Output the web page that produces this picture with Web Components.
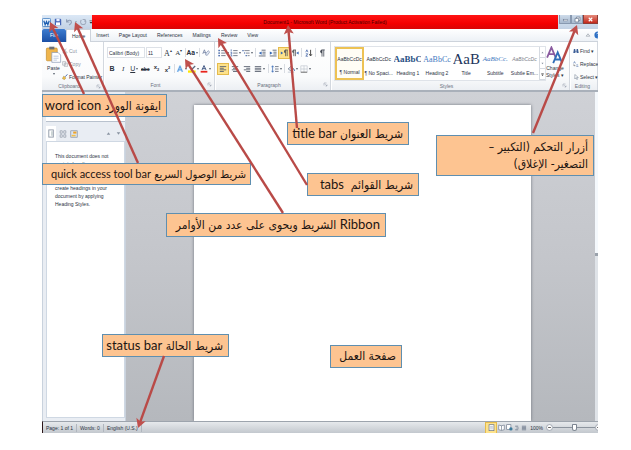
<!DOCTYPE html>
<html lang="en">
<head>
<meta charset="utf-8">
<title>Microsoft Word window parts</title>
<style>
body{margin:0;background:#fff;font-family:"Liberation Sans",Roboto,sans-serif;font-size:5px;line-height:8px;color:#2c333f}
</style>
</head>
<body>
<word-lesson></word-lesson>
<script>
const RESET = `*{box-sizing:border-box}button,select,input{font:inherit;color:inherit;margin:0;padding:0;border:0;background:none;line-height:inherit}svg{display:block}`;
const define = (name, html, init) => customElements.define(name, class extends HTMLElement {
  constructor(){
    super();
    const t = document.createElement('template');
    t.innerHTML = `<style>${RESET}</style>` + html;
    this.attachShadow({mode:'open'}).append(t.content.cloneNode(true));
  }
  connectedCallback(){ if(init) init(this, this.shadowRoot); }
});

const lines = (a, c='#5a6270') => a.map(([x,w],i)=>`<rect x="${x}" y="${1.5+i*2}" width="${w}" height="1.1" fill="${c}"/>`).join('');
const ICONS = {
  word:`<rect x=".5" y=".5" width="9" height="9" rx="1" fill="#e8f2fc" stroke="#3f7cc0" stroke-width=".9"/><path d="M2 3l1.500 4.500L5 4l1.500 3.500L8 3" fill="none" stroke="#1f5fb0" stroke-width="1.400"/>`,
  save:`<path d="M1 1h7l1 1v7H1z" fill="#4667b8"/><rect x="3" y="1" width="4" height="3" fill="#e9f0ff"/><rect x="2.5" y="5.5" width="5" height="3.5" fill="#fff"/>`,
  undo:`<path d="M2 1.5v3.5h3.5M2.3 4.6C4 2 8.3 2.4 8 5.5 7.8 7.300 6.500 8.200 5 8.700" fill="none" stroke="#8f9db5" stroke-width="1.300"/>`,
  redo:`<path d="M3 2.500a3.300 3.300 0 1 0 4.500 0M7.500 5V2h-3" fill="none" stroke="#a0abbd" stroke-width="1.300"/>`,
  caret:`<path d="M3 4h4L5 6.500z" fill="#4a5260"/>`,
  more:`<path d="M2.500 3h5" stroke="#333" /><path d="M2.500 5h5L5 8z" fill="#333"/>`,
  min:`<rect x="2" y="5" width="6" height="2" fill="#fff" stroke="#62718a" stroke-width=".7"/>`,
  max:`<path d="M3.500 3V1.500h5v5H7M1.500 3.500h5v5h-5z" fill="#fff" stroke="#62718a" stroke-width="1"/>`,
  close:`<path d="M2.500 2.500l5 5M7.500 2.500l-5 5" stroke="#fff" stroke-width="1.700"/>`,
  up:`<path d="M2 7l3-4 3 4z" fill="#fff" stroke="#6c7584" stroke-width=".8"/>`,
  help:`<circle cx="5" cy="5" r="4.500" fill="#2c6fc4"/><path d="M3.600 4a1.500 1.500 0 1 1 1.600 1.500v1M5.200 7.400v.8" fill="none" stroke="#fff"/>`,
  paste:`<rect x=".8" y="1.200" width="6.400" height="7.500" rx=".6" fill="#efb54c" stroke="#c48a2a" stroke-width=".4"/><rect x="2.500" y=".4" width="3" height="1.600" fill="#6d6f74"/><path d="M4 3.800h3.700l1.500 1.500v4.300H4z" fill="#fff" stroke="#8496b4" stroke-width=".4"/><path d="M5 6h3M5 7.200h3M5 8.300h2" stroke="#9fb2d0" stroke-width=".4"/>`,
  cut:`<path d="M3 1l3 5M7 1L4 6" stroke="#9aa1ac"/><circle cx="3" cy="7.500" r="1.300" fill="none" stroke="#9aa1ac"/><circle cx="7" cy="7.500" r="1.300" fill="none" stroke="#9aa1ac"/>`,
  copy:`<path d="M1 1h5v6H1zM4 3.500h5v6H4z" fill="#f3f3f3" stroke="#a4a9b2"/>`,
  brush:`<path d="M9 .500L5.500 4.500" stroke="#3b62ab" stroke-width="1.500"/><path d="M3 3.500l3.500 3L4 9.500 .500 7.500z" fill="#f0c04c" stroke="#8a6a2a" stroke-width=".6"/>`,
  clear:`<path d="M1 6l2-5 2 5M1.800 4.500h2.400" fill="none" stroke="#6f7da0"/><path d="M5 5l3-3 1.500 2-3 4-2-.5z" fill="#dfe7f4" stroke="#6f7da0" stroke-width=".7"/>`,
  glow:`<path d="M2 8.500l3-7 3 7M3.200 6h3.600" fill="none" stroke="#b9dcfb" stroke-width="2.600"/><path d="M2 8.500l3-7 3 7M3.200 6h3.600" fill="none" stroke="#4f8fd6" stroke-width="1"/>`,
  marker:`<path d="M8.500 .500L4 5l1.200 1.200L9.500 2z" fill="#56657e"/><rect y="6.800" width="9.500" height="2.800" fill="#ffe600"/>`,
  color:`<path d="M2.500 6.200l2.500-5.500 2.500 5.500M3.300 4.600h3.400" fill="none" stroke="#2f4777" stroke-width="1.100"/><rect x=".8" y="7.300" width="8.400" height="2.200" fill="#e8241c"/>`,
  bullets:`<g fill="#3b5fa5"><rect x=".5" y="1" width="1.800" height="1.800"/><rect x=".5" y="4.200" width="1.800" height="1.800"/><rect x=".5" y="7.400" width="1.800" height="1.800"/></g><path d="M4 2h5.500M4 5.100h5.500M4 8.300h5.500" stroke="#69717f" stroke-width="1.100"/>`,
  numbers:`<path d="M1.500 .5v2.500M.7 4.200h1.500v2H.7M.7 7.500h1.500v2" stroke="#3b5fa5" fill="none" stroke-width=".9"/><path d="M4 2h5.500M4 5.100h5.500M4 8.300h5.500" stroke="#69717f" stroke-width="1.100"/>`,
  multi:`<path d="M.5 2h1.500M2.500 5h1.500M4.500 8.300H6" stroke="#3b5fa5" stroke-width="1.400"/><path d="M3 2h6.500M5 5.100h4.500M7 8.300h2.500" stroke="#69717f"/>`,
  outdent:`<path d="M4.500 1.500h5M5.500 4h4M5.500 6.200h4M1 8.700h8.500" stroke="#59616f" stroke-width="1.100"/><path d="M4.500 3v4.200L1 5.100z" fill="#3568b5"/>`,
  indent:`<path d="M4.500 1.500h5M5.500 4h4M5.500 6.200h4M1 8.700h8.500" stroke="#59616f" stroke-width="1.100"/><path d="M1 3v4.200l3.500-2.100z" fill="#3568b5"/>`,
  ltr:`<path d="M7 1v8M9 1v8M9.500 1.300H6.500" stroke="#555" /><path d="M7 1a2 2 0 0 0 0 4z" fill="#555"/><path d="M1 3l3 2-3 2z" fill="#3568b5"/>`,
  rtl:`<path d="M3.500 1v8M5.500 1v8M6 1.300H3" stroke="#555"/><path d="M3.500 1a2 2 0 0 0 0 4z" fill="#555"/><path d="M9.500 3l-3 2 3 2z" fill="#3568b5"/>`,
  sort:`<path d="M1 4l1.300-3L3.700 4M1 6h2.500L1 9h2.700" fill="none" stroke="#3b5fa5" stroke-width=".9"/><path d="M7 1v7.500M5.300 6.500L7 8.700l1.700-2.200" fill="none" stroke="#444" stroke-width="1.200"/>`,
  pilcrow:`<path d="M5 1v8.500M7.200 1v8.500M8.500 1.200H4.500" stroke="#444a55"/><path d="M5 1a2.200 2.200 0 0 0 0 4.500z" fill="#444a55"/>`,
  left:lines([[1,8],[1,5],[1,8],[1,5]]), center:lines([[1,8],[2.5,5],[1,8],[2.5,5]]),
  right:lines([[1,8],[4,5],[1,8],[4,5]]), justify:lines([[1,8],[1,8],[1,8],[1,8]]),
  spacing:`<path d="M2 1v8M.600 2.800L2 1l1.400 1.800M.600 7.200L2 9l1.400-1.800" fill="none" stroke="#3568b5" stroke-width=".9"/><path d="M5 2h4.500M5 5h4.500M5 8h4.500" stroke="#69717f" stroke-width="1.100"/>`,
  bucket:`<path d="M1.500 5L5 1.500 8.500 5 5 7.500z" fill="#e6ebf3" stroke="#5f6c85" stroke-width=".9"/><path d="M8.700 5l.8 2.500" stroke="#3568b5"/><rect x="1" y="8.200" width="8" height="1.500" fill="#cfd5de"/>`,
  borders:`<path d="M1 1h8v8M1 1v8M5 1v8M1 5h8" stroke="#b3bac6" fill="none" stroke-width=".7"/><path d="M1 9h8" stroke="#444"/>`,
  styles:`<path d="M.6 6.500L3 .8l2.400 5.700M1.500 4.500h3" fill="none" stroke="#8a5b9f" stroke-width="1"/><path d="M4 9.500l2.500-6 2.500 6M5 7.500h3" fill="none" stroke="#2f6db8" stroke-width="1"/>`,
  find:`<path d="M1.500 1.500h2.300v3H6V1.500h2.300L9.500 8.500H6V6H4v2.500H.500z" fill="#3d5f97"/>`,
  replace:`<path d="M1 4l1.500-3L4 4M5.500 6.500h3M5.500 9h3.500" fill="none" stroke="#476aa5"/><path d="M1.500 5.500v2.300h2.500" fill="none" stroke="#555"/>`,
  select:`<path d="M3 .800v7.500l2-2 1.300 3 1.200-.5-1.300-2.900H9z" fill="#fff" stroke="#68758c" stroke-width=".8"/>`,
  launch:`<path d="M2 7V2h5" fill="none" stroke="#8b93a0"/><path d="M4.500 4.500L8 8M8 5v3H5" fill="none" stroke="#8b93a0"/>`,
  headings:`<rect x="2" y="1" width="5" height="8" fill="#fff" stroke="#8d97a6"/><path d="M5.500 2.500v5" stroke="#9aa"/>`,
  thumbs:`<path d="M1.500 1h2.500v3H1.500zM6 1h2.500v3H6zM1.500 6h2.500v3H1.500zM6 6h2.500v3H6z" fill="#fff" stroke="#7c8898" stroke-width=".8"/>`,
  results:`<rect x="1" y="1" width="8" height="8" fill="#dbe5f3" stroke="#7c8898" stroke-width=".8"/><rect x="4" y="2" width="4" height="2.500" fill="#f0a326"/><rect x="2" y="6" width="5" height="2" fill="#f4c04a"/>`,
  tup:`<path d="M1.500 7.500L5 2.500l3.500 5z" fill="#8993a1"/>`, tdown:`<path d="M1.500 2.500h7L5 7.500z" fill="#8993a1"/>`,
  print:`<rect x="1.500" y="1" width="7" height="8.500" fill="#fff" stroke="#667286"/><path d="M3 3.500h4M3 5.300h4M3 7h4" stroke="#9aa5b5" stroke-width=".8"/>`,
  read:`<path d="M5 2.500L1 1.500v6.500l4 1.200 4-1.200V1.500zM5 2.500v6.500" fill="#fff" stroke="#667286" stroke-width=".9"/>`,
  web:`<rect x="1" y="1" width="6" height="7" fill="#fff" stroke="#667286" stroke-width=".9"/><circle cx="7" cy="7" r="2.400" fill="#3c7a9c"/>`,
  outline:`<path d="M2 2h5M4 5h4M2 8h5" stroke="#667286" stroke-width="1.300"/>`,
  draft:`<path d="M1.500 2h7M1.500 4h7M1.500 6h7M1.500 8h7" stroke="#667286" stroke-width="1.200"/>`,
  minus:`<circle cx="5" cy="5" r="4.200" fill="#fff" stroke="#7b8593" stroke-width=".9"/><path d="M3 5h4" stroke="#444" stroke-width="1.200"/>`,
  plus:`<circle cx="5" cy="5" r="4.200" fill="#fff" stroke="#7b8593" stroke-width=".9"/><path d="M3 5h4M5 3v4" stroke="#444" stroke-width="1.200"/>`
};

define('w-icon', `<style>:host{display:inline-block;flex:none;width:var(--s,8px);height:var(--s,8px)}svg{width:100%;height:100%}</style><svg viewBox="0 0 10 10"></svg>`,
  (h,r)=>{ r.querySelector('svg').innerHTML = ICONS[h.getAttribute('name')]; });

define('w-tool', `<style>
:host{display:block;flex:none}
button{display:flex;align-items:center;justify-content:center;gap:1px;height:10px;min-width:10px}
:host([on]) button{background:#fde28b;box-shadow:0 0 0 1px #e5bb4c}
:host([drop]) button::after{content:"";border:1px solid transparent;border-top:2px solid #59616e;border-bottom:0}
:host([stack]) button{flex-direction:column;height:auto}
</style><button type="button"><slot></slot></button>`,
  (h,r)=>{ r.querySelector('button').setAttribute('aria-label', h.getAttribute('label') || h.textContent.trim()); });

define('w-group', `<style>
:host{display:flex;flex-direction:column;flex:none;border-right:1px solid #d3d8df;box-shadow:1px 0 #fff}
.body{flex:1;display:flex;padding:4px 3px 0}
footer{display:flex;align-items:center;height:11px;padding-right:2px;color:#69717e}
span{flex:1;text-align:center}
</style><div class="body"><slot></slot></div><footer><span></span></footer>`,
  (h,r)=>{ r.querySelector('span').textContent=h.getAttribute('label');
    if(!h.hasAttribute('plain')) r.querySelector('footer').insertAdjacentHTML('beforeend','<w-icon name="launch" style="--s:5px"></w-icon>'); });

define('w-style', `<style>
:host{display:block;flex:1 1 0;min-width:0}
button{display:block;width:100%;height:33px;overflow:hidden;white-space:nowrap}
:host([on]) button{border:2px solid #edc254;background:#fffdf5}
b{display:flex;justify-content:center;align-items:center;height:20px;font-weight:400;overflow:hidden;margin:0 1px}
:host([on]) b{height:18px;margin:0}
small{display:block;font-size:5px;line-height:9px;text-align:center}
</style><button type="button"><b><slot></slot></b><small></small></button>`,
  (h,r)=>{ r.querySelector('small').textContent=h.getAttribute('label');
    r.querySelector('b').style.cssText=h.getAttribute('look')||''; });

define('w-titlebar', `<style>
:host{display:flex;height:14px;background:linear-gradient(#dbe8f6,#c3d2e4)}
nav{flex:none;width:50px;display:flex;align-items:center;gap:1px}
nav w-icon[name=save]{margin-left:2px}
h1{flex:1;margin:0;font-size:5px;font-weight:400;line-height:14px;text-align:center;color:#4a0000;background:linear-gradient(#ff1414,#f40000 60%,#d80505);white-space:nowrap}
.ctl{flex:none;display:flex;align-items:flex-start;width:40px;justify-content:flex-end}
.ctl button{height:9px;width:12px;display:grid;place-items:center;background:linear-gradient(#cfdceb,#a9bacf);border:1px solid #8899b0;border-top:0}
.ctl button:last-child{width:15px;background:linear-gradient(#e58b7c,#c4281b);border-color:#8f3b35}
</style>
<nav><w-icon name="word" style="--s:9px"></w-icon><w-icon name="save"></w-icon><w-icon name="undo" style="margin-left:2px"></w-icon><w-icon name="caret" style="--s:4px"></w-icon><w-icon name="redo"></w-icon><w-icon name="more" style="--s:6px"></w-icon></nav>
<h1>Document1 - Microsoft Word (Product Activation Failed)</h1>
<div class="ctl"><button aria-label="Minimize"><w-icon name="min" style="--s:7px"></w-icon></button><button aria-label="Restore"><w-icon name="max" style="--s:7px"></w-icon></button><button aria-label="Close"><w-icon name="close" style="--s:7px"></w-icon></button></div>`);

define('w-tabs', `<style>
:host{display:flex;height:13px;background:linear-gradient(#fff,#edf1f6);border-bottom:1px solid #cdd3db}
button{line-height:13px;height:13px;padding:0 5px;white-space:nowrap}
.file{width:24px;padding:0;color:#fff;background:linear-gradient(#3d7dd0,#1c4fa5);border-radius:2px 2px 0 0}
.home{background:#fff;border:1px solid #cdd3db;border-bottom:0;padding:0 5px}
.end{margin-left:auto;display:flex;align-items:center;gap:3px;margin-right:-4px}
</style><button class="file">File</button><button class="home">Home</button><button>Insert</button><button>Page Layout</button><button>References</button><button>Mailings</button><button>Review</button><button>View</button>
<span class="end"><w-icon name="up" style="--s:6px"></w-icon><w-icon name="help"></w-icon></span>`);

define('w-ribbon', `<style>
:host{display:flex;height:50px;background:linear-gradient(#fff,#fafbfc 72%,#eceff3);border-bottom:2px solid #a9b0ba;overflow:hidden;white-space:nowrap}
.col{display:flex;flex-direction:column;gap:3px}
.row{display:flex;align-items:center;justify-content:space-between;height:13px}
.sep{width:1px;height:9px;background:#d8dce2}
.grow{flex:1}
select{appearance:none;height:11px;border:1px solid #dde1e7;background:#fff;padding:0 1px}
.s0{width:38px}.s1{width:16px}
.gallery{flex:1;min-width:0;display:flex;background:#fff;border:1px solid #dfe3e9}
.scroll{display:flex;flex-direction:column;flex:none;width:6px;border-left:1px solid #d5dae1}
.scroll button{flex:1;display:grid;place-items:center;border-bottom:1px solid #d5dae1}
.clip{display:flex;flex-direction:column;gap:3px;color:#8d939e;align-items:flex-start}
</style>
<w-group label="Clipboard" style="width:62px">
 <w-tool stack drop label="Paste" style="width:17px"><w-icon name="paste" style="--s:17px"></w-icon>Paste</w-tool>
 <div class="clip">
  <w-tool label="Cut"><w-icon name="cut" style="--s:6px"></w-icon>Cut</w-tool>
  <w-tool label="Copy"><w-icon name="copy" style="--s:6px"></w-icon>Copy</w-tool>
  <w-tool label="Format Painter" style="color:#2c333f"><w-icon name="brush" style="--s:6px"></w-icon>Format Painter</w-tool></div>
</w-group>
<w-group label="Font" style="width:111px"><div class="col grow">
 <div class="row"><select class="s0" aria-label="Font"><option>Calibri (Body)</option></select><select class="s1" aria-label="Size"><option>11</option></select>
  <w-tool label="Grow"><span style="font:8px 'Liberation Serif',serif">A<sup style="font-size:4px">▴</sup></span></w-tool><w-tool label="Shrink"><span style="font:7px 'Liberation Serif',serif">A<sup style="font-size:4px">▾</sup></span></w-tool><i class="sep"></i><w-tool drop><span style="font:bold 7px Roboto,sans-serif">Aa</span></w-tool><i class="sep"></i><w-tool label="Clear"><w-icon name="clear"></w-icon></w-tool></div>
 <div class="row"><w-tool><b style="font-size:7px">B</b></w-tool><w-tool><i style="font:italic 7px 'Liberation Serif',serif">I</i></w-tool><w-tool drop><u style="font-size:7px">U</u></w-tool><w-tool><s style="font-weight:bold">abc</s></w-tool><w-tool><span style="font-weight:bold;font-size:6px">x<sub style="font-size:4px">2</sub></span></w-tool><w-tool><span style="font-weight:bold;font-size:6px">x<sup style="font-size:4px">2</sup></span></w-tool><i class="sep"></i><w-tool drop label="Effects"><w-icon name="glow"></w-icon></w-tool><w-tool drop label="Highlight"><w-icon name="marker"></w-icon></w-tool><w-tool drop label="Color"><w-icon name="color"></w-icon></w-tool></div>
</div></w-group>
<w-group label="Paragraph" style="width:116px"><div class="col grow">
 <div class="row"><w-tool drop label="Bullets"><w-icon name="bullets"></w-icon></w-tool><w-tool drop label="Numbering"><w-icon name="numbers"></w-icon></w-tool><w-tool drop label="Multilevel"><w-icon name="multi"></w-icon></w-tool><i class="sep"></i><w-tool label="Outdent"><w-icon name="outdent"></w-icon></w-tool><w-tool label="Indent"><w-icon name="indent"></w-icon></w-tool><w-tool on label="Left to right"><w-icon name="ltr"></w-icon></w-tool><w-tool label="Right to left"><w-icon name="rtl"></w-icon></w-tool><i class="sep"></i><w-tool label="Sort"><w-icon name="sort"></w-icon></w-tool><i class="sep"></i><w-tool label="Marks"><w-icon name="pilcrow"></w-icon></w-tool></div>
 <div class="row" style="padding-right:16px"><w-tool on label="Left"><w-icon name="left"></w-icon></w-tool><w-tool label="Center"><w-icon name="center"></w-icon></w-tool><w-tool label="Right"><w-icon name="right"></w-icon></w-tool><w-tool drop label="Justify"><w-icon name="justify"></w-icon></w-tool><i class="sep"></i><w-tool drop label="Spacing"><w-icon name="spacing"></w-icon></w-tool><i class="sep"></i><w-tool drop label="Shading"><w-icon name="bucket"></w-icon></w-tool><w-tool drop label="Borders"><w-icon name="borders"></w-icon></w-tool></div>
</div></w-group>
<w-group label="Styles" style="flex:1 1 0;min-width:0">
 <div class="gallery">
  <w-style on label="¶ Normal">AaBbCcDc</w-style><w-style label="¶ No Spaci...">AaBbCcDc</w-style>
  <w-style label="Heading 1" look="font:bold 9px 'Liberation Serif',serif;color:#2b5185">AaBbC</w-style>
  <w-style label="Heading 2" look="font:8px 'Liberation Serif',serif;color:#3f78c0">AaBbCc</w-style>
  <w-style label="Title" look="font:15px 'Liberation Serif',serif;color:#1d355c">AaB</w-style>
  <w-style label="Subtitle" look="font:italic 7px 'Liberation Serif',serif;color:#3f78c0">AaBbCc.</w-style>
  <w-style label="Subtle Em..." look="font-style:italic;color:#7d828a">AaBbCcDc</w-style>
  <div class="scroll"><button aria-label="Up"><w-icon name="tup" style="--s:3px"></w-icon></button><button aria-label="Down"><w-icon name="tdown" style="--s:3px"></w-icon></button><button aria-label="More styles"><w-icon name="more" style="--s:5px"></w-icon></button></div>
 </div>
 <w-tool stack label="Change Styles" style="width:20px"><w-icon name="styles" style="--s:18px"></w-icon><span style="line-height:7px">Change<br>Styles ▾</span></w-tool>
</w-group>
<w-group plain label="Editing" style="width:28px"><div class="col">
 <w-tool label="Find"><w-icon name="find" style="--s:6px"></w-icon>Find ▾</w-tool><w-tool label="Replace"><w-icon name="replace" style="--s:6px"></w-icon>Replace</w-tool><w-tool label="Select"><w-icon name="select" style="--s:6px"></w-icon>Select ▾</w-tool></div></w-group>`);

define('w-workspace', `<style>
:host{flex:1;display:flex;background:linear-gradient(#cfd1d6,#c4c6cb 50%,#b5b8bd)}
aside{flex:none;width:84px;background:#e9edf3;border:solid #c9d2dd;border-width:0 1px;padding:22px 0 3px 3px;display:flex;flex-direction:column}
.field{flex:none;height:8px;background:#fff;border-bottom:1px solid #b9c2ce}
.views{display:flex;align-items:center;height:15px;gap:1px;margin-top:4px}
.views button{width:10px;height:15px;display:grid;place-items:center}
.views button:first-child{background:#fff}
.views w-icon:nth-of-type(1){margin-left:auto}
.nav{flex:1;background:#fff;border:1px solid #cfd8e3;padding:10px 8px;line-height:8px}
.nav p{margin:0 0 16px}
main{flex:1;display:flex;padding:13px 64px 0 68px}
article{flex:1;background:#fff;box-shadow:0 0 3px #6e737b}
.bar{flex:none;width:3px;background:linear-gradient(#f4f8fc 49%,#9aa2ac 49%,#9aa2ac 50%,#dfe3e8 50%)}
</style>
<aside><div class="field"></div><div class="views"><button aria-label="Headings"><w-icon name="headings" style="--s:9px"></w-icon></button><button aria-label="Pages"><w-icon name="thumbs" style="--s:8px"></w-icon></button><button aria-label="Results"><w-icon name="results" style="--s:8px"></w-icon></button><w-icon name="tup" style="--s:5px"></w-icon><w-icon name="tdown" style="--s:5px;margin:0 4px"></w-icon></div>
<div class="nav"><p>This document does not<br>contain headings.</p><p>create headings in your<br>document by applying<br>Heading Styles.</p></div></aside>
<main><article></article></main><div class="bar"></div>`);

define('w-status', `<style>
:host{display:flex;align-items:center;height:12px;background:linear-gradient(#e6e9ec,#c3c8ce);border-top:1px solid #9da4ad;border-left:1px solid #2c1518;overflow:hidden;white-space:nowrap}
span{padding:0 3px;border-right:1px solid #b0b6be}
.end{margin-left:auto;display:flex;align-items:center;gap:0;margin-right:-4px}
input{appearance:none;width:42px;height:8px;background:linear-gradient(#8c949e,#8c949e) center/100% 1px no-repeat}
input::-webkit-slider-thumb{appearance:none;width:5px;height:7px;background:#fff;border:1px solid #7d8692;border-radius:1px 1px 3px 3px}
label{margin:0 3px}
</style><span>Page: 1 of 1</span><span>Words: 0</span><span>English (U.S.)</span>
<div class="end"><w-tool on label="Print layout"><w-icon name="print" style="--s:7px"></w-icon></w-tool><w-tool label="Reading" style="width:8px"><w-icon name="read" style="--s:7px"></w-icon></w-tool><w-tool label="Web" style="width:8px"><w-icon name="web" style="--s:7px"></w-icon></w-tool><w-tool label="Outline" style="width:7px"><w-icon name="outline" style="--s:6px"></w-icon></w-tool><w-tool label="Draft" style="width:8px"><w-icon name="draft" style="--s:6px"></w-icon></w-tool><label for="z">100%</label><w-icon name="minus" style="--s:7px"></w-icon><input id="z" type="range" value="50"><w-icon name="plus" style="--s:7px"></w-icon></div>`);

define('w-note', `<style>
:host{position:absolute;display:flex;align-items:center;justify-content:flex-end;padding:0 5px;background:#fdc491;border:1px solid #5f8fb0;color:#1e1512;font:12px/17px "DejaVu Sans Condensed","DejaVu Sans",sans-serif;white-space:nowrap;box-sizing:border-box}
::slotted(bdi){font-family:Lato,sans-serif;font-size:13px}
:host([small]){font-size:11px;padding:0 4px}
:host([small]) ::slotted(bdi){font-size:11px}
</style><div dir="rtl"><slot></slot></div>`);

define('w-arrows', `<style>:host{position:absolute;left:0;top:0;pointer-events:none}</style>
<svg width="631" height="450" viewBox="0 0 631 450"></svg>`, (h,r)=>{
  const A=[[84,94,50,22],[138,163,75,22],[283,213,185,59],[307,185,218,38],[297,128,288,25],[533,133,577,25],[164,356,138,428]];
  r.querySelector('svg').innerHTML = A.map(([x1,y1,x2,y2])=>{
    const d=Math.hypot(x2-x1,y2-y1), u=(x2-x1)/d, v=(y2-y1)/d, p=(b,s)=>`${x2-u*b-v*s} ${y2-v*b+u*s}`;
    return `<path d="M${x1} ${y1}L${p(6,0)}" stroke="#b94a47" stroke-width="2.400"/><path d="M${x2} ${y2}L${p(9,5)}L${p(7,0)}L${p(9,-5)}z" fill="#c0504d"/>`;}).join('');
});

define('word-lesson', `<style>
:host{display:flex;min-height:100vh;position:relative;padding:15px 33px 17px 42px;box-sizing:border-box}
.win{flex:1;min-width:0;display:flex;flex-direction:column;overflow:hidden}
</style>
<div class="win"><w-titlebar></w-titlebar><w-tabs></w-tabs><w-ribbon></w-ribbon><w-workspace></w-workspace><w-status></w-status></div>
<w-note style="left:42px;top:94px;width:125px;height:23px">ايقونة الوورد <bdi>word icon</bdi></w-note>
<w-note small style="left:42px;top:163px;width:209px;height:22px">شريط الوصول السريع <bdi>quick access tool bar</bdi></w-note>
<w-note style="left:287px;top:122px;width:122px;height:23px">شريط العنوان <bdi>title bar</bdi></w-note>
<w-note style="left:307px;top:173px;width:112px;height:23px">شريط القوائم &nbsp;<bdi>tabs</bdi></w-note>
<w-note style="left:166px;top:213px;width:220px;height:24px"><bdi>Ribbon</bdi> الشريط ويحوى على عدد من الأوامر</w-note>
<w-note style="left:436px;top:135px;width:158px;height:41px">أزرار التحكم (التكبير –<br>التصغير- الإغلاق)</w-note>
<w-note style="left:102px;top:334px;width:127px;height:23px">شريط الحالة <bdi>status bar</bdi></w-note>
<w-note style="left:330px;top:345px;width:72px;height:23px">صفحة العمل</w-note>
<w-arrows></w-arrows>`);
</script>
</body>
</html>
